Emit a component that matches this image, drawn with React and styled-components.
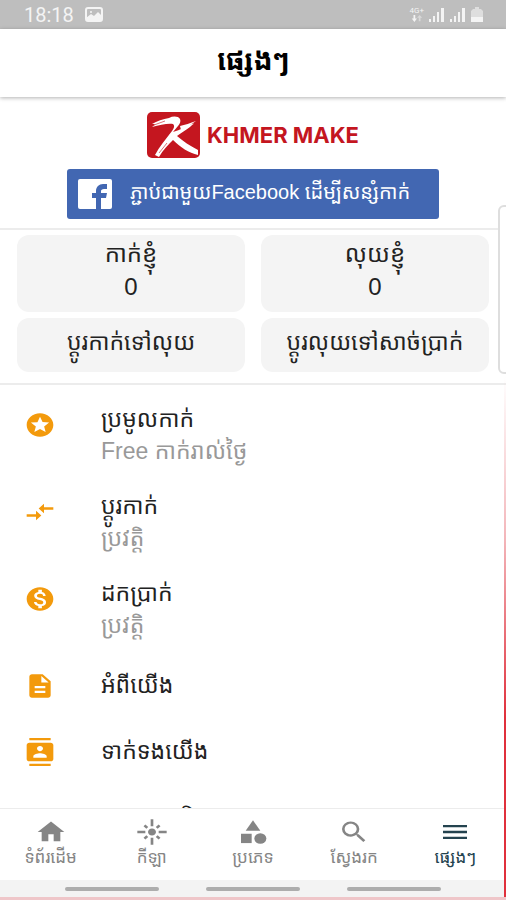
import React from "react";
import styled, { createGlobalStyle } from "styled-components";
import {
  MdStars,
  MdCompareArrows,
  MdMonetizationOn,
  MdDescription,
  MdContacts,
  MdPayment,
  MdHome,
  MdFlare,
  MdCategory,
  MdSearch,
  MdMenu,
} from "react-icons/md";

const menuItems = [
  { icon: MdStars, title: "ប្រមូលកាក់", sub: "Free កាក់រាល់ថ្ងៃ" },
  { icon: MdCompareArrows, title: "ប្ដូរកាក់", sub: "ប្រវត្តិ" },
  { icon: MdMonetizationOn, title: "ដកប្រាក់", sub: "ប្រវត្តិ" },
  { icon: MdDescription, title: "អំពីយើង" },
  { icon: MdContacts, title: "ទាក់ទងយើង" },
  { icon: MdPayment, title: "លក្ខខណ្ឌនិង" },
];

const tabs = [
  { icon: MdHome, label: "ទំព័រដើម" },
  { icon: MdFlare, label: "កីឡា" },
  { icon: MdCategory, label: "ប្រភេទ" },
  { icon: MdSearch, label: "ស្វែងរក" },
  { icon: MdMenu, label: "ផ្សេងៗ", active: true },
];

function Signal() {
  return (
    <svg width="16" height="14" viewBox="0 0 16 14" fill="currentColor" aria-hidden="true">
      <rect x="0" y="11" width="2" height="3" />
      <rect x="4" y="8" width="2" height="6" />
      <rect x="8" y="4" width="2" height="10" />
      <rect x="12" y="0" width="3" height="14" />
    </svg>
  );
}

function KhmerMakeLogo() {
  return (
    <svg width="53" height="46" viewBox="0 0 53 46" aria-hidden="true">
      <rect width="53" height="46" rx="5" fill="#c4161f" />
      <path
        d="M5 12C10 9 16 7 22 6C26 4 31 4 33 7C34 9 33 12 31 14L26 20C33 18 40 14 47 11L43 15C39 18 34 21 30 24C36 29 43 34 51 38L51 43C42 41 33 35 26 28C21 33 16 38 12 45L8 43C12 35 19 27 25 19C27 16 28 14 26 12C21 11 13 13 5 15L9 12Z"
        fill="#fff"
      />
      <path d="M33 14C38 13 43 11 49 9L43 13L47 12L34 18Z" fill="#fff" />
      <path d="M7 13L18 9M12 41L20 31" stroke="#dc7075" strokeWidth="1" />
    </svg>
  );
}

function FacebookLogo() {
  return (
    <svg width="34" height="30" viewBox="0 0 34 30" aria-hidden="true">
      <rect width="34" height="30" rx="2" fill="#fff" />
      <path
        d="M18 30V19H14V14H18V12C18 8 21 5 25 5H29V10H26C24 10 23 11 23 12V14H29L28 19H23V30Z"
        fill="#4267b2"
      />
    </svg>
  );
}

function App() {
  return (
    <Page>
      <GlobalStyle />
      <StatusBar>
        <StatusGroup>
          <span>18:18</span>
          <svg width="18" height="15" viewBox="0 0 18 15" aria-hidden="true">
            <rect x="1" y="1" width="16" height="13" rx="2" fill="none" stroke="currentColor" strokeWidth="2" />
            <path d="M1 11L6 7L9 9L13 5L17 9V14H1Z" fill="currentColor" />
            <circle cx="6" cy="5" r="1" fill="currentColor" />
          </svg>
        </StatusGroup>
        <StatusGroup $tight>
          <Network>
            <span>4G+</span>
            <svg width="12" height="7" viewBox="0 0 12 8" fill="currentColor">
              <path d="M2 0H4V4H6L3 8L0 4H2Z" />
              <path d="M9 0L12 3H10V7H8V3H6Z" opacity="0.5" />
            </svg>
          </Network>
          <Signal />
          <Signal />
          <svg width="12" height="15" viewBox="0 0 12 15" fill="currentColor">
            <path d="M4 0H8V2H10L12 4V10H0V4L2 2H4Z" opacity="0.6" />
            <rect y="10" width="12" height="5" />
          </svg>
        </StatusGroup>
      </StatusBar>
      <Header>
        <h1>ផ្សេងៗ</h1>
      </Header>

      <Brand>
        <BrandName>
          <KhmerMakeLogo />
          <span>KHMER MAKE</span>
        </BrandName>
        <FacebookButton type="button">
          <FacebookLogo />
          <span>ភ្ជាប់ជាមួយFacebook ដើម្បីសន្សំកាក់</span>
        </FacebookButton>
      </Brand>

      <Wallet>
        <Balance>
          <span>កាក់ខ្ញុំ</span>
          <span>0</span>
        </Balance>
        <Balance>
          <span>លុយខ្ញុំ</span>
          <span>0</span>
        </Balance>
        <ExchangeButton type="button">ប្ដូរកាក់ទៅលុយ</ExchangeButton>
        <ExchangeButton type="button">ប្ដូរលុយទៅសាច់ប្រាក់</ExchangeButton>
      </Wallet>

      <Menu>
        {menuItems.map(({ icon: Icon, title, sub }) => (
          <li key={title}>
            <MenuButton type="button" $double={Boolean(sub)}>
              <Icon preserveAspectRatio="none" />
              <MenuText $double={Boolean(sub)}>
                <span>{title}</span>
                {sub && <small>{sub}</small>}
              </MenuText>
            </MenuButton>
          </li>
        ))}
      </Menu>

      <TabBar>
        {tabs.map(({ icon: Icon, label, active }) => (
          <Tab type="button" key={label} $active={active}>
            <Icon preserveAspectRatio="none" />
            <span>{label}</span>
          </Tab>
        ))}
      </TabBar>
      <GestureBar>
        <i />
        <i />
        <i />
      </GestureBar>
      <EdgePanel />
    </Page>
  );
}

export default App;

const GlobalStyle = createGlobalStyle`
  * {
    box-sizing: border-box;
  }
  body {
    margin: 0;
    background: #fff;
    color: #222;
    font-family: "Liberation Sans", "Noto Sans Khmer", "Khmer OS", sans-serif;
  }
  button {
    border: 0;
    padding: 0;
    background: none;
    color: inherit;
    font: inherit;
    cursor: pointer;
  }
`;

const Page = styled.div`
  position: relative;
  display: flex;
  flex-direction: column;
  height: 100vh;
  overflow: hidden;
  border-bottom: 3px solid #efc6c9;

  /* red light along the lower right side */
  &::after {
    content: "";
    position: absolute;
    top: 0;
    right: 0;
    bottom: 0;
    width: 2px;
    background: linear-gradient(#fff0 42%, #f3b6ba 60%, #e0303c 80%);
  }
`;

const StatusBar = styled.div`
  flex: none;
  display: flex;
  align-items: center;
  justify-content: space-between;
  height: 29px;
  padding: 0 23px 0 24px;
  background: #bebebe;
  color: #f4f4f4;
  font-family: Roboto, sans-serif;
  font-size: 20px;
`;

const StatusGroup = styled.div`
  display: flex;
  align-items: center;
  gap: ${(props) => (props.$tight ? "5px" : "11px")};
`;

const Network = styled.div`
  display: flex;
  flex-direction: column;
  align-items: center;
  font-size: 8px;
  line-height: 8px;
`;

const Header = styled.header`
  flex: none;
  display: flex;
  align-items: center;
  justify-content: center;
  height: 68px;
  padding-bottom: 4px;
  box-shadow: 0 1px 4px rgba(0, 0, 0, 0.3);

  h1 {
    margin: 0;
    color: #000;
    font-size: 28px;
    line-height: 32px;
    font-weight: 700;
  }
`;

const Brand = styled.section`
  flex: none;
  display: flex;
  flex-direction: column;
  align-items: center;
  gap: 11px;
  padding: 15px 67px 9px;
  border-bottom: 2px solid #ececec;
`;

const BrandName = styled.div`
  display: flex;
  align-items: center;
  gap: 7px;
  color: #c4161f;
  font-family: Inter, "Liberation Sans", sans-serif;
  font-size: 22px;
  line-height: 44px;
  font-weight: 700;
`;

const FacebookButton = styled.button`
  display: flex;
  align-items: center;
  gap: 18px;
  width: 100%;
  height: 50px;
  padding-left: 11px;
  border-radius: 3px;
  background: #4267b2;

  span {
    padding-bottom: 4px;
    color: #fff;
    font-size: 20px;
    line-height: 32px;
    white-space: nowrap;
  }
`;

const Wallet = styled.section`
  flex: none;
  display: grid;
  grid-template-columns: 1fr 1fr;
  gap: 6px 16px;
  padding: 5px 17px 11px;
  border-bottom: 2px solid #ececec;
`;

const Balance = styled.div`
  display: flex;
  flex-direction: column;
  align-items: center;
  height: 77px;
  padding-top: 2px;
  border-radius: 12px;
  background: #f4f4f4;
  font-size: 24px;
  line-height: 33px;
`;

const ExchangeButton = styled.button`
  && {
    height: 54px;
    padding-bottom: 6px;
    border-radius: 12px;
    background: #f4f4f4;
    font-size: 23px;
    line-height: 32px;
    white-space: nowrap;
  }
`;

const Menu = styled.ul`
  flex: 1;
  min-height: 0;
  overflow: hidden;
  margin: 0;
  padding: 5px 0 0;
  list-style: none;
`;

const MenuButton = styled.button`
  display: flex;
  align-items: flex-start;
  gap: 45px;
  width: 100%;
  height: ${(props) => (props.$double ? "87px" : "66px")};
  padding: 0 24px;
  text-align: left;

  svg {
    flex: none;
    width: 32px;
    height: 28px;
    margin-top: 21px;
    color: #f39a0c;
  }
`;

const MenuText = styled.span`
  display: flex;
  flex-direction: column;
  padding-top: ${(props) => (props.$double ? "13px" : "18px")};
  font-size: 23px;
  line-height: 32px;
  white-space: nowrap;

  small {
    color: #999;
    font-size: 23px;
  }
`;

const TabBar = styled.nav`
  flex: none;
  display: grid;
  grid-template-columns: repeat(5, 1fr);
  height: 72px;
  border-top: 1px solid #ececec;
`;

const Tab = styled.button`
  && {
    display: flex;
    flex-direction: column;
    align-items: center;
    padding-top: 9px;
    color: ${(props) => (props.$active ? "#24434f" : "#858585")};
    font-size: 17px;
    line-height: 24px;
    white-space: nowrap;
  }

  svg {
    width: 32px;
    height: 28px;
  }
`;

const GestureBar = styled.div`
  flex: none;
  display: flex;
  align-items: center;
  justify-content: center;
  gap: 47px;
  height: 17px;
  background: #f3f3f3;

  i {
    width: 94px;
    height: 4px;
    border-radius: 2px;
    background: #adadad;
  }
`;

/* handle that slides over the right edge of the screen */
const EdgePanel = styled.div`
  position: absolute;
  top: 205px;
  right: -6px;
  width: 14px;
  height: 169px;
  border: 2px solid #dedede;
  border-radius: 6px;
  background: #fff;
`;
